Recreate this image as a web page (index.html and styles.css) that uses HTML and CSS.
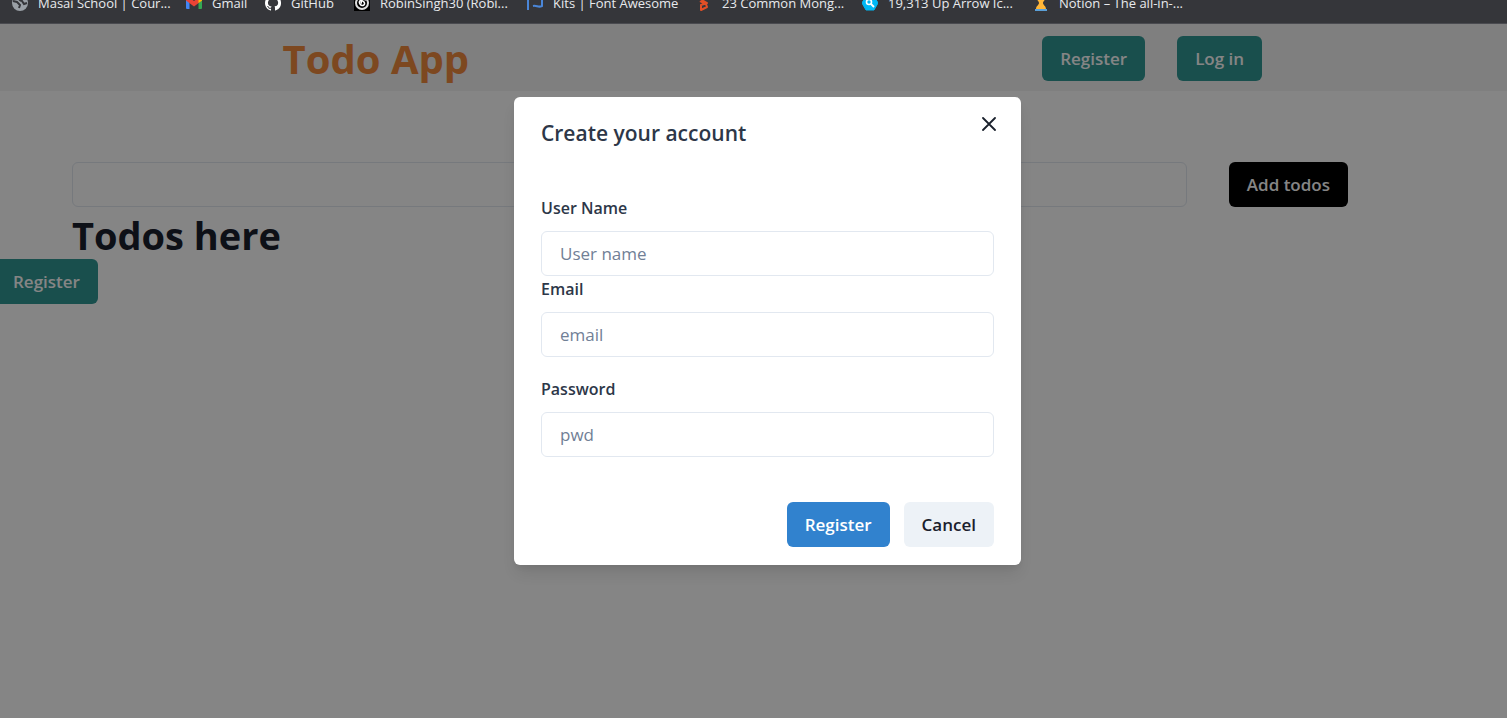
FILE: index.html
```html
<!DOCTYPE html>
<html lang="en">
<head>
<meta charset="utf-8">
<meta name="viewport" content="width=device-width, initial-scale=1">
<title>Todo App</title>
<link rel="stylesheet" href="styles.css">
</head>
<body>
<nav class="bookmarks" aria-label="Bookmarks">
  <div class="bookmark-list">
    <a class="bookmark" href="#"><svg viewBox="0 0 16 16"><circle cx="8" cy="8" r="8" fill="#9aa0a6"/><path d="M1 6l4 1 3 3-1 3M8 2c-2 2 0 4 2 4l2 3 3-1" fill="none" stroke="#35363a" stroke-width="2"/></svg><span>Masai School | Cour...</span></a>
    <a class="bookmark" href="#"><svg viewBox="0 0 16 16"><path d="M0 3h3.500v11H1a1 1 0 0 1-1-1z" fill="#4285f4"/><path d="M12.500 3H16v10a1 1 0 0 1-1 1h-2.500z" fill="#34a853"/><path d="M0 4c0-2 2-2.500 3.500-1.400L8 6l4.500-3.400C14 1.500 16 2 16 4v1.500l-8 6-8-6z" fill="#ea4335"/><path d="M12.500 3C14 1.500 16 2 16 4v1.500l-3.500 2.600z" fill="#fbbc04"/></svg><span>Gmail</span></a>
    <a class="bookmark" href="#"><svg viewBox="0 0 16 16"><path fill="#fff" d="M8 0C3.580 0 0 3.580 0 8c0 3.540 2.290 6.530 5.470 7.590.4.070.550-.170.550-.380v-1.490c-2.010.370-2.530-.490-2.690-.940-.090-.230-.480-.940-.820-1.130-.280-.150-.680-.520-.010-.530.630-.010 1.080.580 1.230.820.720 1.210 1.870.870 2.330.660.070-.520.280-.870.510-1.070-1.780-.200-3.640-.890-3.640-3.950 0-.870.310-1.590.820-2.150-.080-.200-.360-1.020.080-2.120 0 0 .670-.210 2.200.820a7.600 7.600 0 0 1 4 0c1.530-1.040 2.200-.820 2.200-.820.440 1.100.160 1.920.080 2.120.510.560.820 1.270.820 2.150 0 3.070-1.870 3.750-3.650 3.950.290.250.540.730.540 1.480v2.200c0 .210.150.460.550.380A8 8 0 0 0 8 0z"/></svg><span>GitHub</span></a>
    <a class="bookmark" href="#"><svg viewBox="0 0 16 16"><path fill="#000" d="M0 0h16v16H0z"/><circle cx="8" cy="8" r="6" fill="none" stroke="#ddd" stroke-width="2"/><path d="M12 5C8 3 4 6 6 9s6 1 4-2-4 1-2 1" fill="none" stroke="#fff" stroke-width="1.500"/></svg><span>RobinSingh30 (Robi...</span></a>
    <a class="bookmark" href="#"><svg viewBox="0 0 16 16"><path d="M1 0v15M2 3c5-3 7 2 13-1v9c-4 2-5-1-9 0" fill="none" stroke="#4a86d8" stroke-width="2"/></svg><span>Kits | Font Awesome</span></a>
    <a class="bookmark" href="#"><svg viewBox="0 0 16 16"><path d="M11 1L4 4l7 4-6 2v5l6-3-1-3-6-3" fill="none" stroke="#e34f26" stroke-width="2" stroke-linejoin="round"/></svg><span>23 Common Mong...</span></a>
    <a class="bookmark" href="#"><svg viewBox="0 0 16 16"><path d="M4 1h8l4 7-4 7H4L0 8z" fill="#00b9f5" stroke="#00b9f5" stroke-linejoin="round"/><circle cx="7" cy="7" r="2.500" fill="none" stroke="#fff" stroke-width="1.600"/><path d="M9 9l3 3" stroke="#fff" stroke-width="1.800"/></svg><span>19,313 Up Arrow Ic...</span></a>
    <a class="bookmark" href="#"><svg viewBox="0 0 16 16"><path d="M3 1h10c0 4-3 5-3 7s3 3 3 6H3c0-3 3-4 3-6S3 5 3 1z" fill="#ffb638"/><path d="M2 14h12v2H2z" fill="#5ba0d8"/></svg><span>Notion – The all-in-...</span></a>
  </div>
</nav>
<div class="page">
  <header class="header">
    <h1 class="brand">Todo App</h1>
    <div class="header-actions">
      <button class="button button-teal" type="button">Register</button>
      <button class="button button-teal" type="button">Log in</button>
    </div>
  </header>
  <main class="main">
    <form class="todo-form">
      <input class="input" type="text" aria-label="New todo">
      <button class="button button-black" type="button">Add todos</button>
    </form>
    <h2 class="todo-title">Todos here</h2>
  </main>
  <button class="button button-teal button-edge" type="button">Register</button>

  <div class="overlay">
    <section class="dialog" role="dialog" aria-modal="true" aria-labelledby="dialog-title">
      <button class="close" type="button" aria-label="Close"><svg viewBox="0 0 14 14"><path d="M1 1l12 12M13 1L1 13" fill="none" stroke="#1a202c" stroke-width="1.800" stroke-linecap="round"/></svg></button>
      <h2 class="dialog-title" id="dialog-title">Create your account</h2>
      <form class="dialog-form">
        <div class="field">
          <label for="username">User Name</label>
          <input class="input" id="username" type="text" placeholder="User name">
        </div>
        <div class="field">
          <label for="email">Email</label>
          <input class="input" id="email" type="email" placeholder="email">
        </div>
        <div class="field field-spaced">
          <label for="password">Password</label>
          <input class="input" id="password" type="password" placeholder="pwd">
        </div>
        <div class="dialog-actions">
          <button class="button button-blue" type="button">Register</button>
          <button class="button button-gray" type="button">Cancel</button>
        </div>
      </form>
    </section>
  </div>
</div>
</body>
</html>
```

FILE: styles.css
```css
* { box-sizing: border-box; }

body {
  margin: 0;
  min-height: 100vh;
  display: flex;
  flex-direction: column;
  background: #fff;
  color: #1a202c;
  font: 17px/27px "Open Sans", "Noto Sans", sans-serif;
}

h1, h2 { margin: 0; }

button, input { font: inherit; }

.bookmarks {
  height: 24px;
  overflow: hidden;
  background: #35363a;
  border-bottom: 1px solid #4a4b50;
}

.bookmark-list {
  display: grid;
  grid-template-columns: 174px 79px 89px 173px 169px 166px 171px 160px;
  margin-top: -6px;
  padding-left: 12px;
}

.bookmark {
  display: flex;
  align-items: center;
  gap: 10px;
  color: #e8eaed;
  font-size: 13px;
  line-height: 18px;
  text-decoration: none;
  white-space: nowrap;
}

.bookmark svg { width: 16px; height: 16px; flex: none; }

.page { position: relative; flex: 1; }

.header {
  display: flex;
  align-items: center;
  justify-content: space-between;
  height: 67px;
  padding: 2px 16.25% 0 18.75%;
  background: #f3f3f3;
}

.brand {
  color: #f08a3e;
  font-size: 40px;
  line-height: 54px;
  font-weight: 700;
}

.header-actions { display: flex; gap: 32px; }

.button {
  height: 45px;
  padding: 0 18px;
  border: 0;
  border-radius: 6px;
  font-weight: 600;
  white-space: nowrap;
}

.button-teal { background: #319795; color: #fff; }
.button-black { background: #000; color: #fff; }
.button-blue { background: #3182ce; color: #fff; }
.button-gray { background: #edf2f7; color: #1a202c; }
.button-edge { display: block; margin-left: -5px; }

.main { padding: 71px 159px 0 72px; }

.todo-form {
  display: flex;
  align-items: center;
  gap: 42px;
}

.input {
  width: 100%;
  height: 45px;
  padding: 0 18px;
  border: 1px solid #e2e8f0;
  border-radius: 6px;
  background: transparent;
  color: inherit;
}

.input::placeholder { color: #718096; opacity: 1; }

.todo-title {
  padding-top: 4px;
  font-size: 38px;
  line-height: 48px;
  font-weight: 700;
}

.overlay {
  position: absolute;
  inset: 0;
  display: flex;
  justify-content: center;
  align-items: flex-start;
  padding: 73px 0 0 28px;
  background: rgba(0, 0, 0, 0.48);
}

.dialog {
  position: relative;
  width: 507px;
  padding: 18px 27px;
  border-radius: 6px;
  background: #fff;
  box-shadow: 0 10px 15px -3px rgba(0, 0, 0, 0.1), 0 4px 6px -2px rgba(0, 0, 0, 0.05);
}

.close {
  position: absolute;
  top: 9px;
  right: 14px;
  display: grid;
  place-items: center;
  width: 36px;
  height: 36px;
  padding: 0;
  border: 0;
  background: none;
}

.close svg { width: 14px; height: 14px; }

.dialog-title {
  margin-bottom: 44px;
  font-size: 21px;
  line-height: 36px;
  font-weight: 600;
  color: #2d3748;
}

.field label {
  display: block;
  margin-bottom: 9px;
  font-size: 16px;
  font-weight: 600;
  color: #2d3748;
}

.field-spaced { margin-top: 19px; }

.dialog-actions {
  display: flex;
  justify-content: flex-end;
  gap: 14px;
  margin-top: 45px;
}
```
